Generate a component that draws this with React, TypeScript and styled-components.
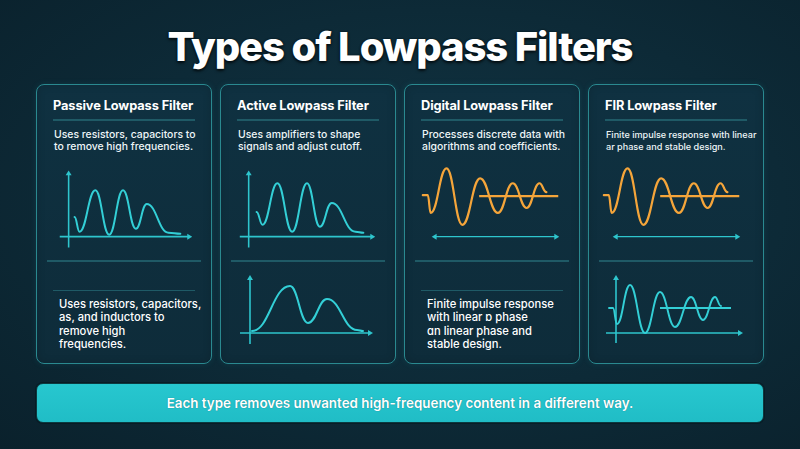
import React from "react";
import styled, { createGlobalStyle } from "styled-components";

const Global = createGlobalStyle`
  html, body { margin: 0; padding: 0; }
  *, *::before, *::after { box-sizing: border-box; }
  body {
    width: 800px; height: 449px; overflow: hidden;
    background: radial-gradient(ellipse at 55% 45%, #113443 0%, #0d2a37 55%, #0a212c 100%);
    font-family: Inter, "Noto Sans", sans-serif;
    color: #fff;
  }
`;

const Page = styled.div`
  width: 800px;
  height: 449px;
  padding: 22px 36px 0;
  display: flex;
  flex-direction: column;
`;

const Title = styled.h1`
  margin: 0;
  height: 50px;
  line-height: 50px;
  text-align: center;
  font-size: 40px;
  font-weight: 800;
  letter-spacing: -1.1px;
  color: #ffffff;
  text-shadow: 0 0 2px #031015, 0 2px 3px rgba(0, 0, 0, 0.7);
`;

const Grid = styled.div`
  margin-top: 12px;
  display: grid;
  grid-template-columns: repeat(4, 176px);
  column-gap: 8px;
  height: 280px;
`;

const Card = styled.section`
  border: 1.5px solid #2a8990;
  border-radius: 8px;
  background: linear-gradient(180deg, #0f3141 0%, #0e2c3a 100%);
  box-shadow: 0 0 6px rgba(40, 170, 180, 0.12), inset 0 0 8px rgba(0, 0, 0, 0.15);
  display: flex;
  flex-direction: column;
  overflow: hidden;
`;

const TopSection = styled.div`
  height: 175px;
  display: flex;
  flex-direction: column;
  padding: 13px 0 0;
`;

const CardTitle = styled.h2`
  margin: 0 16px;
  font-size: 12.8px;
  line-height: 16px;
  font-weight: 700;
  letter-spacing: -0.1px;
  color: #fff;
  white-space: nowrap;
`;

const Rule = styled.div<{ $top?: number }>`
  height: 1.5px;
  margin: ${(p) => p.$top ?? 5}px 16px 0;
  background: #1f5a66;
`;

const Desc = styled.p<{ $size?: number }>`
  margin: 8px 16px 0 17px;
  font-size: ${(p) => p.$size ?? 10.4}px;
  line-height: 12.5px;
  font-weight: 500;
  color: #eef6f8;
  white-space: nowrap;
`;

const ChartBox = styled.div`
  margin-top: auto;
  margin-bottom: 5px;
  height: 95px;
  display: flex;
`;

const MidRule = styled.div`
  height: 1.5px;
  margin: 0 10px;
  background: #1f5a66;
`;

const BottomSection = styled.div`
  flex: 1;
  display: flex;
  flex-direction: column;
  padding-top: 3px;
`;

const BottomText = styled.p`
  margin: 7px 10px 0 22px;
  font-size: 11.2px;
  line-height: 13.3px;
  font-weight: 500;
  color: #ffffff;
  white-space: nowrap;
`;

const Footer = styled.div`
  margin-top: 19px;
  height: 40px;
  border-radius: 7px;
  border: 1px solid #0b3a40;
  background: linear-gradient(180deg, #27c7cf 0%, #20bdc6 100%);
  box-shadow: 0 0 0 1px rgba(0, 0, 0, 0.25);
  display: flex;
  align-items: center;
  justify-content: center;
  font-size: 13.4px;
  font-weight: 600;
  color: #ffffff;
  text-shadow: 0 0 1px rgba(0, 60, 70, 0.6);
`;

const TEAL = "#33cfd6";
const AXIS = "#2ec5cd";
const ORANGE = "#f5a53a";

type Pt = [number, number];

function smooth(pts: Pt[]): string {
  let d = `M${pts[0][0]},${pts[0][1]}`;
  for (let i = 1; i < pts.length; i++) {
    const [x0, y0] = pts[i - 1];
    const [x1, y1] = pts[i];
    const k = (x1 - x0) * 0.45;
    d += ` C${x0 + k},${y0} ${x1 - k},${y1} ${x1},${y1}`;
  }
  return d;
}

const Axes: React.FC<{ x: number; y0: number; y1: number; ay: number; x0: number; x1: number }> = ({
  x,
  y0,
  y1,
  ay,
  x0,
  x1,
}) => (
  <g>
    <line x1={x} y1={y0 + 3} x2={x} y2={y1} stroke={AXIS} strokeWidth={1.6} />
    <polygon points={`${x - 3},${y0 + 5} ${x + 3},${y0 + 5} ${x},${y0}`} fill={AXIS} />
    <line x1={x0} y1={ay} x2={x1 - 3} y2={ay} stroke={AXIS} strokeWidth={1.6} />
    <polygon points={`${x1 - 5},${ay - 3} ${x1 - 5},${ay + 3} ${x1},${ay}`} fill={AXIS} />
  </g>
);

const Svg: React.FC<{ h: number; children: React.ReactNode }> = ({ h, children }) => (
  <svg width={176} height={h} viewBox={`0 0 176 ${h}`} fill="none">
    {children}
  </svg>
);

const PassiveChart = () => (
  <Svg h={95}>
    <Axes x={32} y0={10} y1={88} ay={77} x0={23} x1={157} />
    <path
      d={smooth([
        [38, 57],
        [43, 72],
        [59, 30],
        [73, 75],
        [87, 30],
        [100, 69],
        [111, 44],
        [133, 73],
        [145, 74],
      ])}
      stroke={TEAL}
      strokeWidth={2}
      strokeLinecap="round"
    />
  </Svg>
);

const ActiveChart = () => (
  <Svg h={95}>
    <Axes x={28} y0={10} y1={88} ay={77} x0={19} x1={156} />
    <path
      d={smooth([
        [36, 52],
        [42, 65],
        [57, 23],
        [72, 72],
        [87, 23],
        [100, 67],
        [112, 43],
        [136, 72],
        [144, 73],
      ])}
      stroke={TEAL}
      strokeWidth={2}
      strokeLinecap="round"
    />
  </Svg>
);

const RingingChart: React.FC<{ dx?: number }> = ({ dx = 0 }) => (
  <Svg h={95}>
    <g transform={`translate(${dx},0)`}>
      <path
        d={
          "M18,35 L23,35 " +
          smooth([
            [23, 35],
            [26, 53],
            [42, 8],
            [58, 65],
            [76, 18],
            [94, 53],
            [109, 23],
            [123, 48],
            [136, 23],
            [143, 32],
          ]).replace(/^M[^ ]+/, "")
        }
        stroke={ORANGE}
        strokeWidth={2.2}
        strokeLinecap="round"
        strokeLinejoin="round"
      />
      <line x1={75} y1={36} x2={155} y2={36} stroke={ORANGE} strokeWidth={2.2} />
      <line x1={31} y1={77} x2={152} y2={77} stroke={AXIS} strokeWidth={1.4} />
      <polygon points="27,77 32,74 32,80" fill={AXIS} />
      <polygon points="156,77 151,74 151,80" fill={AXIS} />
    </g>
  </Svg>
);

const HumpChart = () => (
  <Svg h={90}>
    <Axes x={29} y0={10} y1={79} ay={68} x0={19} x1={152} />
    <path
      d={smooth([
        [31, 66],
        [69, 21],
        [87, 58],
        [106, 34],
        [136, 65],
        [142, 66],
      ])}
      stroke={TEAL}
      strokeWidth={2}
      strokeLinecap="round"
    />
  </Svg>
);

const FirChart = () => (
  <Svg h={90}>
    <Axes x={27} y0={10} y1={78} ay={68} x0={17} x1={154} />
    <path
      d={
        "M20,43 L24,43 " +
        smooth([
          [24, 43],
          [28, 59],
          [41, 20],
          [56, 68],
          [71, 27],
          [86, 62],
          [102, 32],
          [114, 55],
          [126, 32],
          [132, 41],
        ]).replace(/^M[^ ]+/, "")
      }
      stroke={TEAL}
      strokeWidth={1.9}
      strokeLinecap="round"
      strokeLinejoin="round"
    />
    <line x1={71} y1={43} x2={142} y2={43} stroke={TEAL} strokeWidth={1.9} />
  </Svg>
);

type CardData = {
  title: string;
  desc: string[];
  descSize?: number;
  chart: React.ReactNode;
  bottom: React.ReactNode;
};

const cards: CardData[] = [
  {
    title: "Passive Lowpass Filter",
    desc: ["Uses resistors, capacitors to", "to remove high frequencies."],
    chart: <PassiveChart />,
    bottom: (
      <>
        <Rule $top={25} />
        <BottomText>
          Uses resistors, capacitors,
          <br />
          as, and inductors to
          <br />
          remove high
          <br />
          frequencies.
        </BottomText>
      </>
    ),
  },
  {
    title: "Active Lowpass Filter",
    desc: ["Uses amplifiers to shape", "signals and adjust cutoff."],
    chart: <ActiveChart />,
    bottom: <HumpChart />,
  },
  {
    title: "Digital Lowpass Filter",
    desc: ["Processes discrete data with", "algorithms and coefficients."],
    chart: <RingingChart />,
    bottom: (
      <>
        <Rule $top={25} />
        <BottomText>
          Finite impulse response
          <br />
          with linear ɒ phase
          <br />
          ɑn linear phase and
          <br />
          stable design.
        </BottomText>
      </>
    ),
  },
  {
    title: "FIR Lowpass Filter",
    desc: ["Finite impulse response with linear", "ar phase and stable design."],
    descSize: 9.1,
    chart: <RingingChart dx={-3} />,
    bottom: <FirChart />,
  },
];

export default function App() {
  return (
    <>
      <Global />
      <Page>
        <Title>Types of Lowpass Filters</Title>
        <Grid>
          {cards.map((c) => (
            <Card key={c.title}>
              <TopSection>
                <CardTitle>{c.title}</CardTitle>
                <Rule />
                <Desc $size={c.descSize}>
                  {c.desc[0]}
                  <br />
                  {c.desc[1]}
                </Desc>
                <ChartBox>{c.chart}</ChartBox>
              </TopSection>
              <MidRule />
              <BottomSection>{c.bottom}</BottomSection>
            </Card>
          ))}
        </Grid>
        <Footer>Each type removes unwanted high-frequency content in a different way.</Footer>
      </Page>
    </>
  );
}
